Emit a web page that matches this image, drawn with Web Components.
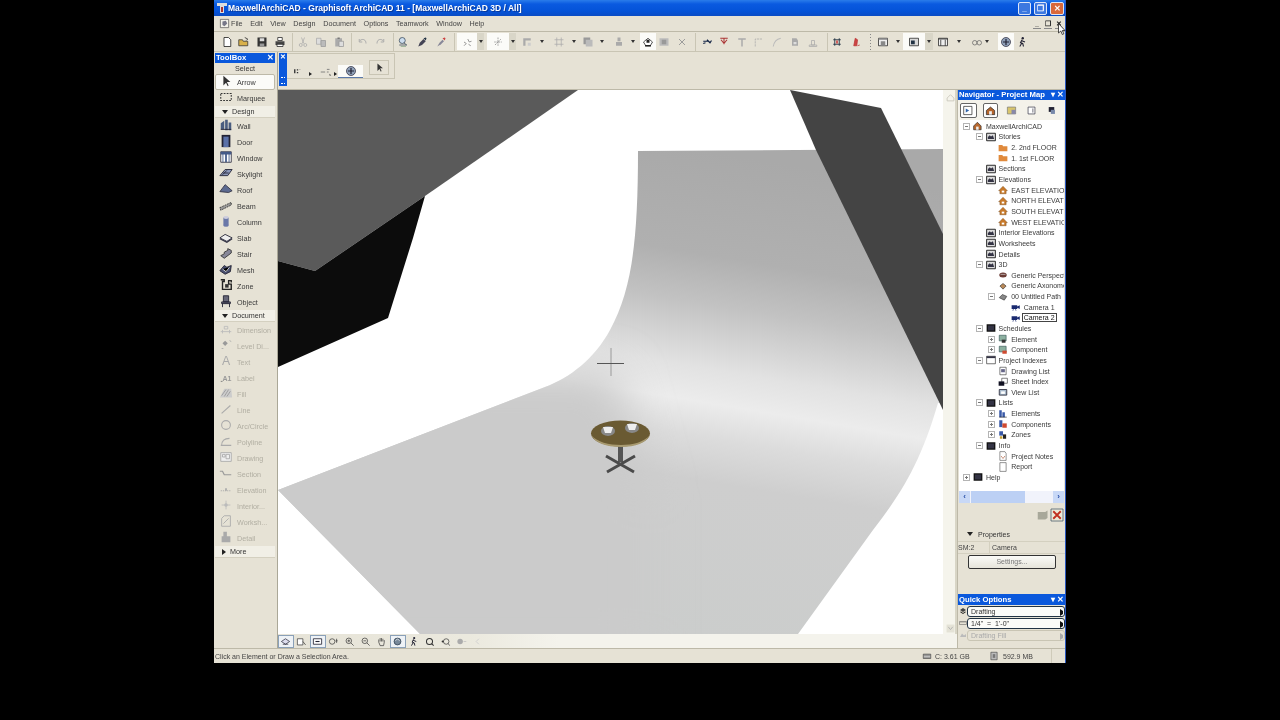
<!DOCTYPE html>
<html>
<head>
<meta charset="utf-8">
<title>ArchiCAD</title>
<style>
  html, body { margin: 0; background: #000; height: 100%; overflow: hidden; }
  body { font: 7.2px "Liberation Sans", Arial, sans-serif; color: #333; }
</style>
</head>
<body>
<app-window></app-window>
<script>
const ICONS = {
  new: '<path d="M4 2h6l3 3v9H4z" fill="#fff" stroke="#111"/>',
  open: '<path d="M1 13V5h5l1 2h6v6z" fill="#d8b04a" stroke="#333"/><path d="M9 2l4 2-2 2" fill="none" stroke="#222"/>',
  save: '<path d="M2 2h12v12H2z" fill="#333"/><path d="M5 3h6v4H5z" fill="#ddd"/><path d="M5 10h6v4H5z" fill="#999"/>',
  print: '<path d="M5 2h6v4H5z" fill="#fff" stroke="#222"/><path d="M2 7h12v5H2z" fill="#444"/><path d="M4 11h8v3H4z" fill="#fff" stroke="#222"/>',
  cut: '<path d="M6 2l3 8M10 2l-3 8" stroke="#aaa" fill="none"/><circle cx="5" cy="12" r="2" fill="none" stroke="#aaa"/><circle cx="11" cy="12" r="2" fill="none" stroke="#aaa"/>',
  copy: '<path d="M2 3h6v8H2z" fill="#ddd" stroke="#aaa"/><path d="M8 6h6v8H8z" fill="#bbb" stroke="#999"/>',
  paste: '<path d="M3 3h9v11H3z" fill="#aaa"/><path d="M6 2h3v2H6z" fill="#777"/><path d="M8 7h6v7H8z" fill="#ddd" stroke="#999"/>',
  undo: '<path d="M4 6c4-3 8-1 8 4M3 4v4h4" fill="none" stroke="#aaa" stroke-width="1.3"/>',
  redo: '<path d="M12 6c-4-3-8-1-8 4M13 4v4H9" fill="none" stroke="#aaa" stroke-width="1.3"/>',
  find: '<circle cx="7" cy="6" r="4" fill="#cde" stroke="#345"/><path d="M3 12h10M9 9l4 3" stroke="#345"/><path d="M5 14h7" stroke="#8a8"/>',
  pick: '<path d="M3 14l2-5 5-5 3 3-5 5z" fill="#445"/><path d="M10 3l3-1 1 1-1 3z" fill="#234"/>',
  pick2: '<path d="M3 14l3-5 4-4 2 2-4 4z" fill="#889"/><path d="M10 3l3-1 1 1-1 3z" fill="#c44"/>',
  grav: '<path d="M4 8l3 2-3 3M9 4l2 4 3-1M10 11l3 2" stroke="#777" fill="none"/>',
  grav2: '<path d="M8 2v12M3 8h10M4 12l8-8" stroke="#888" stroke-dasharray="2 1" fill="none"/>',
  align: '<path d="M3 3v10h3V6h7V3z" fill="#aaa"/><path d="M9 9h4v4H9z" fill="#ccc"/>',
  grid: '<path d="M5 2v12M11 2v12M2 5h12M2 11h12" stroke="#aaa"/>',
  layer: '<path d="M2 2h9v9H2z" fill="#999"/><path d="M5 5h9v9H5z" fill="#bbb"/>',
  pen: '<path d="M6 2h4v5H6zM4 8h8v5H4z" fill="#aaa"/>',
  plan: '<path d="M2 8l6-5 6 5-3 5H5z" fill="#fff" stroke="#222"/><path d="M4 12h8v2H4zM6 5h4v4H6z" fill="#222"/>',
  sect: '<path d="M2 3h12v10H2z" fill="#bbb"/><path d="M5 5h6v6H5z" fill="#999"/>',
  xmark: '<path d="M4 4l8 8M12 4l-8 8" stroke="#999" stroke-width="1.3"/>',
  a1: '<path d="M3 7h6M8 5l4 4 2-3M3 10l3-1" stroke="#124" stroke-width="1.6" fill="none"/>',
  a2: '<path d="M3 3h10M8 3v8M4 5l4 5 4-5" stroke="#a33" stroke-width="1.4" fill="none"/>',
  a3: '<path d="M3 3h10v2H9v9H7V5H3z" fill="#aaa"/>',
  a4: '<path d="M3 14V4h9" stroke="#aaa" fill="none" stroke-dasharray="3 1"/>',
  a5: '<path d="M3 14C4 8 8 4 13 3" stroke="#bbb" fill="none" stroke-width="1.4"/>',
  a6: '<path d="M4 3h6l2 3v7H4z" fill="#aaa"/><path d="M6 8h4v3H6z" fill="#ddd"/>',
  a7: '<path d="M3 12h10v2H3zM6 6h4v6H6z" fill="none" stroke="#aaa"/>',
  a8: '<path d="M3 5h10M3 11h10M5 3v10M11 3v10" stroke="#234" fill="none" stroke-width="1.2"/><path d="M7 6h2v4H7z" fill="#c33"/>',
  a9: '<path d="M7 3l3 2-1 8H5zM10 13l3-1" stroke="#b33" fill="#c44" stroke-width="1"/>',
  fr1: '<path d="M2 3h12v10H2z" fill="#eee" stroke="#222"/><path d="M2 3h12v2H2zM5 7h6v6H5z" fill="#888"/>',
  fr2: '<path d="M2 3h12v10H2z" fill="#d8d8d8" stroke="#222"/><path d="M4 6h5v5H4z" fill="#234"/>',
  fr3: '<path d="M2 3h12v10H2z" fill="#eee" stroke="#222"/><path d="M5 5v8M11 5v8M2 4h12" stroke="#222"/>',
  glass: '<circle cx="5" cy="9" r="3" fill="none" stroke="#666"/><circle cx="11" cy="9" r="3" fill="none" stroke="#666"/>',
  orbit: '<circle cx="8" cy="8" r="6" fill="#8fa0b8" stroke="#334"/><path d="M4 8h8M8 4v8" stroke="#223" stroke-width="1.6"/>',
  walk: '<circle cx="9" cy="3" r="1.6" fill="#223"/><path d="M8 5l-2 4 3 1 1 4M8 9l-3 5M7 6l5 2" stroke="#223" stroke-width="1.4" fill="none"/>',
  arrow: '<path d="M5 2v11l3-3 2 4 1-1-2-4h4z" fill="#333"/>',
  marq: '<path d="M2 4h12v8H2z" fill="none" stroke="#333" stroke-dasharray="2 1.4" stroke-width="1.2"/>',
  wall: '<path d="M2 6l4-3v10H2zM7 2h3v12H7zM11 5h3v9h-3z" fill="#4a5d80"/><path d="M2 13h12" stroke="#223"/>',
  door: '<path d="M3 1h10v14H3z" fill="#223"/><path d="M5 3h6v12H5z" fill="#5a70a8"/>',
  window: '<path d="M2 2h12v12H2z" fill="#fff" stroke="#334"/><path d="M2 2h12v3H2zM7 5h2v9H7zM4 5h1v9H4zM11 5h1v9h-1z" fill="#445a88"/>',
  skylight: '<path d="M1 11l6-7h8l-5 7z" fill="#8a96b8" stroke="#223"/><path d="M5 8h6M4 10l5-5" stroke="#223"/>',
  roof: '<path d="M1 11L7 3l8 7-4 2z" fill="#5c6a90" stroke="#334"/>',
  beam: '<path d="M1 11l13-6v3L2 14z" fill="#999" stroke="#333" stroke-dasharray="2 1"/>',
  column: '<path d="M5 4h6v9H5z" fill="#6a78a8"/><ellipse cx="8" cy="4" rx="3" ry="1.6" fill="#ccd"/><ellipse cx="8" cy="13" rx="3" ry="1.6" fill="#6a78a8"/>',
  slab: '<path d="M1 9l6-4 8 4-6 4z" fill="#eee" stroke="#223"/><path d="M1 10l8 4 6-4" stroke="#334" fill="none" stroke-width="1.3"/>',
  stair: '<path d="M2 11l4-2 0-2 4-2 0-2 4 2v3l-8 6z" fill="#889" stroke="#333"/>',
  mesh: '<path d="M1 10l5-6 3 2 5-2-1 7-6 3z" fill="#4a5070" stroke="#223"/><path d="M4 8l4 3 4-5" stroke="#ddd"/>',
  zone: '<path d="M2 2h4v2H4v9h10V7h-3V3h3v2" fill="none" stroke="#222" stroke-width="1.6"/><path d="M7 7h4v4H7z" fill="#333"/>',
  object: '<path d="M5 2h6v7H5zM3 9h10v2H3zM4 11v4M12 11v4" fill="#667" stroke="#223"/>',
  dim: '<path d="M2 11h12M4 9v4M12 9v4M6 5h4v3H6z" stroke="#bbb" fill="none"/>',
  level: '<path d="M4 6l3-3 3 3-3 3z" fill="#999"/><path d="M3 12h2M12 3l2 1" stroke="#aaa"/>',
  atext: '<text x="8" y="13" text-anchor="middle" font-family="Liberation Sans" font-size="14" fill="#aaa">A</text>',
  alabel: '<text x="9" y="12" text-anchor="middle" font-family="Liberation Sans" font-size="8" font-weight="700" fill="#999">A1</text><path d="M2 13h2" stroke="#777"/>',
  fill: '<path d="M1 13L6 3h8l1 10z" fill="#ccc"/><path d="M3 11l5-7M6 12l5-8M9 12l4-6" stroke="#999"/>',
  line: '<path d="M3 13L13 4" stroke="#aaa" stroke-width="1.2"/>',
  arc: '<circle cx="8" cy="8" r="5" fill="none" stroke="#aaa" stroke-width="1.2"/>',
  poly: '<path d="M2 13h12M3 13c0-5 3-8 9-8" fill="none" stroke="#aaa" stroke-width="1.2"/>',
  draw: '<path d="M2 3h12v10H2z" fill="#eee" stroke="#aaa"/><path d="M4 5h3v3H4zM8 5h4v5H8z" fill="none" stroke="#aaa"/>',
  sect2: '<path d="M1 6h3l2 4h5l3 0" stroke="#999" fill="none" stroke-width="1.4"/>',
  elev: '<path d="M2 10h12" stroke="#aaa" stroke-dasharray="1.4 1"/><path d="M7 7h2v3H7z" fill="#aaa"/>',
  inter: '<path d="M8 3v10M3 8h10" stroke="#bbb"/><circle cx="8" cy="8" r="2" fill="#bbb"/>',
  work: '<path d="M3 14V5l3-3h7v12z" fill="none" stroke="#aaa"/><path d="M5 11l6-6" stroke="#aaa"/>',
  detail: '<path d="M5 2h4v5h4v7H3V7h2z" fill="#aaa"/>',
  tabmap: '<path d="M1 2h12v12H1z" fill="#fff" stroke="#222"/><path d="M4 5l5 3-5 3z" fill="#36a"/>',
  tabhome: '<path d="M2 8l6-5 6 5v6H2z" fill="#b3642c" stroke="#222"/><path d="M6 9h4v5H6z" fill="#eee"/>',
  tabfold: '<path d="M2 3h12v10H2z" fill="#d9c56b" stroke="#777"/><path d="M8 7h6v6H8z" fill="#88a"/>',
  tabpage: '<path d="M3 3h10v10H3z" fill="#fff" stroke="#334"/><path d="M10 5v6" stroke="#334"/>',
  tabpub: '<path d="M4 3h8v7H4z" fill="#223"/><path d="M7 7h6v6H7z" fill="#78a"/>',
  project: '<path d="M1 8l6-6 6 6v6H1z" fill="#b8682e" stroke="#222"/><path d="M5 9h4v5H5z" fill="#eee"/>',
  box: '<path d="M1 2h14v12H1z" fill="#ddd" stroke="#111" stroke-width="1.4"/><path d="M3 8l3-3 2 2 3-2 2 6H3z" fill="#334"/>',
  black: '<path d="M1 2h14v12H1z" fill="#111"/><path d="M3 4h10v8H3z" fill="#334"/>',
  frame: '<path d="M1 2h14v12H1z" fill="#fff" stroke="#222"/><path d="M1 2h14v3H1z" fill="#334"/>',
  story: '<path d="M1 3h6l1 2h7v8H1z" fill="#e08a3c"/>',
  house: '<path d="M1 9l7-7 7 7-2 0v5H3V9z" fill="#c87a2a" stroke="#6a3a10" stroke-width=".6"/><path d="M6 9h4v3H6z" fill="#fff"/>',
  persp: '<ellipse cx="8" cy="8" rx="6" ry="4" fill="#6b3c35"/><path d="M4 7h8" stroke="#ddd"/>',
  axo: '<path d="M3 8l5-4 5 4-5 5z" fill="#b98958" stroke="#333"/>',
  path3d: '<path d="M2 9l5-5 7 3-4 6z" fill="#888" stroke="#333"/>',
  camera: '<path d="M1 5h9v6H1zM10 7l4-2v6l-4-2z" fill="#1a2a70"/><path d="M4 11l-1 3M7 11l1 3" stroke="#1a2a70"/>',
  sched: '<path d="M2 2h11v9H2z" fill="#8cb0a0" stroke="#355"/><path d="M6 9h6v5H6z" fill="#333"/>',
  sched2: '<path d="M2 2h11v9H2z" fill="#8cb0a0" stroke="#355"/><path d="M7 9h7v5H7z" fill="#d04a30"/>',
  draws: '<path d="M3 2h10v12H3z" fill="#fff" stroke="#333"/><path d="M5 5h6v5H5z" fill="#668"/>',
  sheet: '<path d="M6 2h9v8H6z" fill="#fff" stroke="#333"/><path d="M1 7h9v7H1z" fill="#112"/>',
  viewl: '<path d="M2 4h12v9H2z" fill="#abc" stroke="#223" stroke-width="1.3"/><path d="M5 7h6v4H5z" fill="#fff"/>',
  elems: '<path d="M2 2h4v11H2zM7 5h4v8H7z" fill="#3a5aa8"/><path d="M2 13h12" stroke="#222"/>',
  comps: '<path d="M2 2h5v11H2z" fill="#3a5aa8"/><path d="M7 7h7v7H7z" fill="#d04a30"/>',
  zones: '<path d="M2 2h6v7H2z" fill="#3a5aa8"/><path d="M8 7h5v7H8z" fill="#222"/><path d="M3 10h4v4H3z" fill="#c8a030"/>',
  notes: '<path d="M3 1h8l2 3v11H3z" fill="#fff" stroke="#555"/><path d="M5 8l3 4 3-4" stroke="#a53" fill="none"/>',
  report: '<path d="M3 1h10v14H3z" fill="#fff" stroke="#555"/>',
  logo: '<path d="M2 2h12v12H2z" fill="#f4f2ea" stroke="#555"/><path d="M5 5l5-1 2 4-4 4-3-2z" fill="#778"/>',
  nav1: '<path d="M2 8l6-4 6 4-6 4z" fill="#dde" stroke="#223"/><path d="M4 12h8" stroke="#223"/>',
  nav2: '<path d="M2 4h8v9H2z" fill="#fff" stroke="#333"/><path d="M10 8l4 5" stroke="#333"/>',
  nav3: '<path d="M2 4h12v8H2z" fill="#fff" stroke="#223" stroke-width="1.2"/><path d="M5 8h6" stroke="#223" stroke-width="1.6"/>',
  zfit: '<circle cx="6" cy="8" r="4" fill="none" stroke="#333"/><path d="M11 7h3M12.5 4v6" stroke="#333"/>',
  zin: '<circle cx="7" cy="7" r="4" fill="none" stroke="#333"/><path d="M5 7h4M7 5v4M10 10l4 4" stroke="#333"/>',
  zout: '<circle cx="7" cy="7" r="4" fill="none" stroke="#333"/><path d="M5 7h4M10 10l4 4" stroke="#333"/>',
  pan: '<path d="M4 9V5M6 8V3M8 8V3M10 8V4M12 9V6M4 9l2 5h5l1-5" stroke="#333" fill="none"/>',
  nav8: '<circle cx="8" cy="8" r="5" fill="#789" stroke="#234"/><path d="M5 7l3-3 3 3" stroke="#fff" fill="none"/>',
  zprev: '<circle cx="8" cy="8" r="4.4" fill="none" stroke="#333" stroke-width="1.5"/><path d="M11 11l3 3" stroke="#333" stroke-width="1.5"/>',
  znext: '<circle cx="4" cy="8" r="1.6" fill="#333"/><circle cx="9" cy="8" r="4" fill="none" stroke="#333"/><path d="M12 11l2 3" stroke="#333"/>',
  zdis: '<circle cx="6" cy="8" r="4" fill="#aaa"/><path d="M11 8h4" stroke="#bbb"/>',
  chev: '<path d="M10 4L6 8l4 4" fill="none" stroke="#ccc" stroke-width="1.2"/>',
  idlg: '<path d="M3 6h2v6H3zM7 6h2v2H7zM7 10h2v2H7zM11 6h1v1h-1z" fill="#333"/>',
  ilin: '<path d="M2 8h5M9 5h3M9 8h2" stroke="#777"/><path d="M12 10l2 2-2 0z" fill="#333"/>',
  layers: '<path d="M2 6l6-4 6 4-6 4z" fill="#444"/><path d="M2 10l6 4 6-4-2-1-4 3-4-3z" fill="#222"/>',
  scale: '<path d="M1 5h14v6H1z" fill="none" stroke="#555"/><path d="M4 5v3M8 5v3M12 5v3" stroke="#555"/>',
  pen2: '<path d="M2 12l4-7 4 4 4-3v6z" fill="#bbb"/>',
  disk: '<path d="M2 5h12v7H2z" fill="#999" stroke="#444"/><path d="M3 9h10" stroke="#ddd"/>',
  ram: '<path d="M3 2h10v12H3z" fill="#bbb" stroke="#444"/><path d="M6 5h4v6H6z" fill="#777"/>',
  gearbox: '<path d="M1 4h10l3-2v10l-3 2H1z" fill="#a8a89a"/>',
  redx: '<path d="M0 0h16v16H0z" fill="#ece9d8" stroke="#456"/><path d="M3 3l10 10M13 3L3 13" stroke="#c03020" stroke-width="2.4"/>',
  up: '<path d="M2 9l6-6 6 6v5H2z" fill="none" stroke="#c4c2b6" stroke-width="1.4"/>',
  dn: '<path d="M1 1h14v14H1z" fill="#e4e2d6"/><path d="M4 5l4 5 4-5" fill="none" stroke="#aaa" stroke-width="1.4"/>'
};

class UiIcon extends HTMLElement {
  static get observedAttributes() { return ['name']; }
  constructor() {
    super();
    this.attachShadow({ mode: 'open' });
  }
  attributeChangedCallback() { this.draw(); }
  connectedCallback() { this.draw(); }
  draw() {
    const s = this.getAttribute('size') || 12;
    this.shadowRoot.innerHTML = `
      <style>:host { display: inline-flex; flex: none; line-height: 0; } svg { overflow: visible; }</style>
      <svg width="${s}" height="${s}" viewBox="0 0 16 16">${ICONS[this.getAttribute('name')] || ''}</svg>`;
  }
}
customElements.define('ui-icon', UiIcon);

const titleTemplate = document.createElement('template');
titleTemplate.innerHTML = `
  <style>
  :host { display: flex; align-items: center; height: 16px; padding: 0 1px 0 3px; color: #fff;
    font: bold 8.5px "Liberation Sans", Arial, sans-serif; text-shadow: 1px 1px 0 #0a3a9a;
    background: linear-gradient(#2a7cea 0, #0a5ae0 25%, #0453d8 70%, #0a4cc4 100%); }
  .txt { flex: 1; white-space: nowrap; overflow: hidden; margin-left: 1px; }
  .btn { width: 13px; height: 13px; margin-left: 3px; border: 1px solid #dce6f8; border-radius: 2px; background: #3c78e0; display: flex; align-items: center; justify-content: center; font-size: 8px; box-sizing: border-box; text-shadow: none; }
  .close { background: #d9683a; width: 14px; }
  .logo { width: 10px; height: 10px; }
  </style>
  <svg class="logo" viewBox="0 0 10 10"><path d="M0 0h10v3H7v7H3V3H0z" fill="#ddd"/><path d="M4 4h2v5H4z" fill="#a33"/></svg>
  <span class="txt"><slot></slot></span>
  <span class="btn">_</span><span class="btn">&#10064;</span><span class="btn close">&#10005;</span>
`;
class WinTitle extends HTMLElement {
  constructor() {
    super();
    this.attachShadow({ mode: 'open' }).appendChild(titleTemplate.content.cloneNode(true));
  }
}
customElements.define('win-title', WinTitle);

const menuTemplate = document.createElement('template');
menuTemplate.innerHTML = `
  <style>
  :host { display: flex; align-items: center; height: 16px; padding-left: 5px; color: #444; border-bottom: 1px solid #bdb9a8; box-sizing: border-box; }
  .items { display: flex; flex: 1; margin-left: 1px; white-space: nowrap; }
  .items span { margin-right: 7.6px; }
  .mdi { display: flex; gap: 3px; margin-right: 2px; font: bold 7px "Liberation Sans", sans-serif; color: #222; }
  .mdi span { width: 8px; height: 9px; text-align: center; line-height: 9px; border-bottom: 1px solid #888; }
  </style>
  <ui-icon name="logo" size="11"></ui-icon>
  <div class="items"><span>File</span><span>Edit</span><span>View</span><span>Design</span><span>Document</span><span>Options</span><span>Teamwork</span><span>Window</span><span>Help</span></div>
  <div class="mdi"><span>_</span><span>&#10064;</span><span>&#10005;</span></div>
`;
class MenuBar extends HTMLElement {
  constructor() {
    super();
    this.attachShadow({ mode: 'open' }).appendChild(menuTemplate.content.cloneNode(true));
  }
}
customElements.define('menu-bar', MenuBar);

// [icon, centre x on the page, highlighted width]
const TOOLS = [
  ['new',227],['open',244],['save',262],['print',280],['|',292],['cut',303],['copy',321],['paste',339],['|',351],['undo',363],['redo',380],['|',393],
  ['find',403],['pick',422],['pick2',441],['|',454],['grav',467,20],['g',480.5,7],['grav2',498,22],['g',512.5,7],['align',527],['.',542],['grid',559],['.',574],['layer',588],['.',602],['pen',619],['.',633],
  ['plan',648,16],['sect',664],['xmark',682],['|',695],['a1',707],['a2',724],['a3',742],['a4',759],['a5',777],['a6',795],['a7',813],['|',827],['a8',837],['a9',856],[':',870],
  ['fr1',883],['.',898],['fr2',914,22],['g',929,8],['fr3',943],['.',959],['glass',977],['.',987],['orbit',1006,16],['walk',1022]
];

const stripStyle = `
  :host { display: flex; align-items: center; height: 20px; background: #e6e2d5; border-bottom: 1px solid #c9c5b4; box-sizing: border-box; }
  .c { display: flex; align-items: center; justify-content: center; height: 17px; flex: none; }
  .c.w { background: #fbfbf8; }
  .c.g { background: #d9d6c8; }
  .sep { width: 1px; height: 18px; background: #c9c5b4; flex: none; }
  .dot { width: 0; height: 0; border: 2px solid transparent; border-top: 3px solid #333; border-bottom: 0; flex: none; }
  .dots { width: 1px; height: 16px; flex: none; background: repeating-linear-gradient(#888 0 1px, transparent 1px 3px); }
`;
class TopToolbar extends HTMLElement {
  constructor() {
    super();
    let right = 214;
    const cells = TOOLS.map(([n, cx, w]) => {
      const width = n === '|' || n === ':' ? 1 : n === '.' ? 4 : w || 12;
      const m = `margin-left:${cx - width / 2 - right}px`;
      right = cx + width / 2;
      if (n === '|') return `<span class="sep" style="${m}"></span>`;
      if (n === '.') return `<span class="dot" style="${m}"></span>`;
      if (n === ':') return `<span class="dots" style="${m}"></span>`;
      if (n === 'g') return `<span class="c g" style="${m};width:${width}px"><span class="dot"></span></span>`;
      return `<span class="c${w ? ' w' : ''}" style="${m};width:${width}px"><ui-icon name="${n}"></ui-icon></span>`;
    }).join('');
    this.attachShadow({ mode: 'open' }).innerHTML = `<style>${stripStyle}</style>${cells}`;
  }
}
customElements.define('top-toolbar', TopToolbar);

const infoTemplate = document.createElement('template');
infoTemplate.innerHTML = `
  <style>
  :host { display: flex; height: 38px; background: #e6e2d5; border-bottom: 1px solid #bdb9a8; box-sizing: border-box; padding-left: 1px; }
  .grip { width: 8px; height: 33px; margin-top: 1px; background: #0a58dc; color: #fff; font: bold 7px/8px "Liberation Sans", sans-serif; text-align: center; display: flex; flex-direction: column; justify-content: space-between; align-items: center; }
  .grip i { width: 4px; height: 7px; border: 1px dotted #fff; border-width: 1px 0; margin-bottom: 2px; box-sizing: border-box; }
  .box { width: 108px; height: 26px; margin-top: 1px; border-top: 1px solid #c9c5b4; border-right: 1px solid #c9c5b4; border-bottom: 1px solid #c9c5b4; box-sizing: border-box; }
  .in { display: flex; align-items: flex-start; margin: 11px 0 0 5px; }
  .dot { width: 0; height: 0; border: 2px solid transparent; border-left: 3px solid #222; border-right: 0; margin-top: 7px; flex: none; }
  .cur { background: #fbfbf8; width: 25px; height: 13px; display: flex; justify-content: center; border-bottom: 1px solid #5a78a8; margin-left: 1px; box-sizing: border-box; flex: none; }
  .pick { margin: -5px 0 0 6px; width: 20px; height: 15px; border: 1px solid #c9c5b4; display: flex; align-items: center; justify-content: center; box-sizing: border-box; flex: none; }
  </style>
  <div class="grip">&#10005;<i></i></div>
  <div class="box">
    <div class="in"><ui-icon name="idlg" size="11"></ui-icon><span class="dot" style="margin-left:6px"></span><ui-icon name="ilin" size="14" style="margin-left:7px"></ui-icon><span class="dot" style="margin-left:1px"></span>
    <span class="cur"><ui-icon name="orbit" size="12"></ui-icon></span>
    <span class="pick"><ui-icon name="arrow" size="11"></ui-icon></span></div>
  </div>
`;
class InfoBox extends HTMLElement {
  constructor() {
    super();
    this.attachShadow({ mode: 'open' }).appendChild(infoTemplate.content.cloneNode(true));
  }
}
customElements.define('info-box', InfoBox);

const headStyle = `color:#fff;background:#0a58dc;font:bold 7.7px/10px "Liberation Sans",sans-serif;height:10px;display:flex;justify-content:space-between;padding:0 1px;white-space:nowrap;`;

const toolTemplate = document.createElement('template');
toolTemplate.innerHTML = `
  <style>
  :host { display: flex; align-items: center; height: 16px; padding-left: 4px; gap: 4px; color: #3a3a3a; box-sizing: border-box; white-space: nowrap; overflow: hidden; }
  :host([off]) { color: #b1aea2; }
  :host([on]) { background: #fbfbf8; border: 1px solid #bdb9a8; border-radius: 2px; padding-left: 3px; }
  </style>
  <span id="i"></span><slot></slot>
`;
class ToolItem extends HTMLElement {
  constructor() {
    super();
    this.attachShadow({ mode: 'open' }).appendChild(toolTemplate.content.cloneNode(true));
    this.shadowRoot.getElementById('i').innerHTML = `<ui-icon name="${this.getAttribute('icon')}" size="14"></ui-icon>`;
  }
}
customElements.define('tool-item', ToolItem);

const groupTemplate = document.createElement('template');
groupTemplate.innerHTML = `
  <style>
  :host { display: flex; align-items: center; height: 12px; background: #f1efe6; color: #333; padding-left: 7px; gap: 4px; box-sizing: border-box; border-bottom: 1px solid #d4d0c0; }
  i { width: 0; height: 0; border: 3px solid transparent; }
  :host(:not([closed])) i { border-top: 4px solid #222; border-bottom: 0; }
  :host([closed]) i { border-left: 4px solid #222; border-right: 0; }
  </style>
  <i></i><slot></slot>
`;
class ToolGroup extends HTMLElement {
  constructor() {
    super();
    this.attachShadow({ mode: 'open' }).appendChild(groupTemplate.content.cloneNode(true));
  }
}
customElements.define('tool-group', ToolGroup);

const paletteTemplate = document.createElement('template');
paletteTemplate.innerHTML = `
  <style>
  :host { display: block; background: #e6e2d5; border-right: 1px solid #aaa797; box-sizing: border-box; padding: 1px 2px 0 1px; }
  .head { ${headStyle} }
  .sel { height: 11px; line-height: 11px; text-align: center; color: #333; }
  .body { display: flex; flex-direction: column; }
  </style>
  <div class="head"><span>ToolBox</span><span>&#10005;</span></div>
  <div class="sel">Select</div>
  <div class="body"><slot></slot></div>
`;
class ToolPalette extends HTMLElement {
  constructor() {
    super();
    this.attachShadow({ mode: 'open' }).appendChild(paletteTemplate.content.cloneNode(true));
  }
}
customElements.define('tool-palette', ToolPalette);

const sceneTemplate = document.createElement('template');
sceneTemplate.innerHTML = `
  <style>
  :host { display: grid; grid-template-columns: 665px 14px; grid-template-rows: 544px 14px; background: #fff; min-width: 0; }
  svg { display: block; }
  .vs { background: #f5f4ec; border-right: 2px solid #d8d5c6; box-sizing: border-box; padding: 3px 0 0 3px; display: flex; flex-direction: column; justify-content: space-between; }
  .vs ui-icon { margin-bottom: 1px; }
  .bar { grid-column: 1 / 3; background: linear-gradient(90deg, #e6e3d7 0, #ebe9de 190px, #f4f3ec 280px, #f4f3ec 100%); display: flex; align-items: center; }
  .bar span { width: 15.95px; height: 13px; display: flex; align-items: center; justify-content: center; flex: none; box-sizing: border-box; }
  .bar span.on { border: 1px solid #8aa0b8; background: #eef2f6; }
  </style>
  <svg width="665" height="544" viewBox="278 90 665 544">
    <defs>
      <linearGradient id="grey" gradientUnits="userSpaceOnUse" x1="700" y1="150" x2="620" y2="630">
        <stop offset="0" stop-color="#a9a9a9"/><stop offset=".21" stop-color="#b0b0b0"/><stop offset=".31" stop-color="#c2c2c2"/><stop offset=".44" stop-color="#e2e2e2"/><stop offset=".51" stop-color="#ececec"/><stop offset=".58" stop-color="#dcdcdc"/><stop offset=".67" stop-color="#cecece"/><stop offset="1" stop-color="#cbcdcc"/>
      </linearGradient>
      <filter id="soft" x="-20%" y="-20%" width="140%" height="140%"><feGaussianBlur stdDeviation="22"/></filter>
      <clipPath id="shape"><path d="M638 151L943 149V403H938C920 465 900 495 873 530L798 634H420L278 490L545 387C570 378 595 358 610 330C632 290 638 240 638 151Z"/></clipPath>
    </defs>
    <path d="M638 151L943 149V403H938C920 465 900 495 873 530L798 634H420L278 490L545 387C570 378 595 358 610 330C632 290 638 240 638 151Z" fill="url(#grey)"/>
    <g clip-path="url(#shape)"><path d="M240 372H615L650 500V660H240Z" fill="#cbcbcb" filter="url(#soft)"/></g>
    <path d="M278 90H578L425 196L315 271L278 261Z" fill="#5a5a5a"/>
    <path d="M425 196L413 238L388 318L278 367V261L315 271Z" fill="#0c0c0c"/>
    <path d="M790 90L881 108L943 234V410L816 150Z" fill="#444"/>
    <path d="M611 348V376" stroke="#9a9a9a" stroke-width="1"/><path d="M597 363.500H624" stroke="#555" stroke-width="1"/>
    <path d="M618 446h5v16h-5z" fill="#555"/>
    <path d="M606 456L634 472M635 456L607 472" stroke="#4a4a4a" stroke-width="3"/>
    <ellipse cx="620.500" cy="433.500" rx="29.500" ry="13" fill="#6a5a32"/>
    <path d="M591 435c4 8 15 12 30 12s25-4 29-12c-6 7-17 10-29 10s-24-3-30-10z" fill="#a89a70"/>
    <ellipse cx="608" cy="431" rx="7" ry="5" fill="#888"/><path d="M603 427h10l-2 6h-6z" fill="#eee"/>
    <ellipse cx="632" cy="428" rx="7" ry="5" fill="#888"/><path d="M627 424h10l-2 6h-6z" fill="#eee"/>
  </svg>
  <div class="vs"><ui-icon name="up" size="9"></ui-icon><ui-icon name="dn" size="9"></ui-icon></div>
  <div class="bar" id="bar"></div>
`;
class SceneView extends HTMLElement {
  constructor() {
    super();
    this.attachShadow({ mode: 'open' }).appendChild(sceneTemplate.content.cloneNode(true));
    const names = ['nav1', 'nav2', 'nav3', 'zfit', 'zin', 'zout', 'pan', 'nav8', 'walk', 'zprev', 'znext', 'zdis', 'chev'];
    this.shadowRoot.getElementById('bar').innerHTML = names.map((n, i) =>
      `<span class="${[0, 2, 7].includes(i) ? 'on' : ''}"><ui-icon name="${n}" size="11"></ui-icon></span>`).join('');
  }
}
customElements.define('scene-view', SceneView);

const rowTemplate = document.createElement('template');
rowTemplate.innerHTML = `
  <style>
  :host { display: flex; align-items: center; height: 10.65px; color: #3a3a3a; white-space: nowrap; font-size: 7px; }
  .t { width: 7px; height: 7px; flex: none; border: 1px solid #b4b4b4; box-sizing: border-box; position: relative; margin-right: 3px; }
  .t::before { content: ""; position: absolute; left: 1px; right: 1px; top: 2px; height: 1px; background: #777; }
  .t.p::after { content: ""; position: absolute; top: 1px; bottom: 1px; left: 2px; width: 1px; background: #777; }
  .sp { width: 7px; flex: none; margin-right: 3px; }
  .l { padding: 0 1px; margin-left: 2px; }
  :host([sel]) .l { outline: 1px solid #444; color: #111; }
  </style>
  <span id="tw"></span><ui-icon id="ic" size="10"></ui-icon><span class="l"><slot></slot></span>
`;
class TreeRow extends HTMLElement {
  constructor() {
    super();
    this.attachShadow({ mode: 'open' }).appendChild(rowTemplate.content.cloneNode(true));
    this.style.paddingLeft = (this.getAttribute('lv') * 12.6 + 4) + 'px';
    const t = this.getAttribute('t');
    this.shadowRoot.getElementById('tw').className = t === '-' ? 't' : t === '+' ? 't p' : 'sp';
    this.shadowRoot.getElementById('ic').setAttribute('name', this.getAttribute('icon'));
  }
}
customElements.define('tree-row', TreeRow);

const TREE = [
  [0,'-','project','MaxwellArchiCAD'],[1,'-','box','Stories'],[2,'','story','2. 2nd FLOOR'],[2,'','story','1. 1st FLOOR'],
  [1,'','box','Sections'],[1,'-','box','Elevations'],[2,'','house','EAST ELEVATION'],[2,'','house','NORTH ELEVATION'],[2,'','house','SOUTH ELEVATION'],[2,'','house','WEST ELEVATION'],
  [1,'','box','Interior Elevations'],[1,'','box','Worksheets'],[1,'','box','Details'],[1,'-','box','3D'],[2,'','persp','Generic Perspective'],[2,'','axo','Generic Axonometry'],
  [2,'-','path3d','00 Untitled Path'],[3,'','camera','Camera 1'],[3,'','camera','Camera 2','sel'],
  [1,'-','black','Schedules'],[2,'+','sched','Element'],[2,'+','sched2','Component'],[1,'-','frame','Project Indexes'],[2,'','draws','Drawing List'],[2,'','sheet','Sheet Index'],[2,'','viewl','View List'],
  [1,'-','black','Lists'],[2,'+','elems','Elements'],[2,'+','comps','Components'],[2,'+','zones','Zones'],[1,'-','black','Info'],[2,'','notes','Project Notes'],[2,'','report','Report'],[0,'+','black','Help']
];

const navTemplate = document.createElement('template');
navTemplate.innerHTML = `
  <style>
  :host { display: flex; flex-direction: column; background: #e6e2d5; border-left: 1px solid #bdb9a8; height: 558px; box-sizing: border-box; overflow: hidden; font-size: 7px; }
  .head { ${headStyle} }
  .tabs { display: flex; align-items: center; height: 20px; gap: 6px; padding-left: 2px; background: #f4f2ea; flex: none; }
  .tabs span { width: 14px; height: 15px; display: flex; align-items: center; justify-content: center; }
  .tabs span.on { background: #fff; border: 1px solid #666; width: 15px; height: 15px; border-radius: 2px; box-sizing: border-box; }
  .tree { background: #fff; margin: 0 1px; height: 371px; padding-top: 1px; overflow: hidden; box-sizing: border-box; flex: none; }
  .hs { height: 12px; margin: 0 1px; display: flex; background: #f1f3fb; flex: none; }
  .hs b { width: 11px; background: #c8d8f6; color: #2a50a8; font: bold 8px/12px "Liberation Sans", sans-serif; text-align: center; }
  .hs i { width: 54px; margin-left: 1px; background: #bcd0f4; }
  .hs u { flex: 1; }
  .btns { height: 24px; display: flex; justify-content: flex-end; align-items: center; gap: 2px; padding-right: 2px; flex: none; }
  .prop { height: 14px; display: flex; align-items: center; gap: 5px; padding-left: 9px; color: #333; flex: none; }
  .prop i { border: 3px solid transparent; border-top: 4px solid #222; border-bottom: 0; }
  .row { display: grid; grid-template-columns: 32px 1fr; line-height: 11px; height: 11px; color: #444; border-top: 1px solid #d4d0c0; border-bottom: 1px solid #d4d0c0; flex: none; }
  .row span:first-child { border-right: 1px solid #d4d0c0; }
  .row span:last-child { padding-left: 2px; }
  .set { width: 88px; height: 14px; margin: 1px 0 0 10px; border: 1px solid #333; border-radius: 2px; background: linear-gradient(#fbfbf8, #e6e4da); text-align: center; line-height: 12px; color: #777; box-sizing: border-box; flex: none; }
  .gap { height: 25px; flex: none; }
  .qo { height: 11px; line-height: 11px; flex: none; }
  .qr { display: flex; align-items: center; height: 12px; padding-left: 1px; flex: none; }
  .qb { flex: 1; margin-right: 0; height: 11px; border: 1px solid #234; border-radius: 3px; background: #fbfbf8; display: flex; justify-content: space-between; line-height: 9px; padding: 0 1px 0 3px; color: #333; box-sizing: border-box; }
  .qb i { border: 2px solid transparent; border-left: 3px solid #111; border-right: 0; margin-top: 2px; }
  .qb.off { border-color: #c9c5b4; color: #aaa; background: none; }
  .qb.off i { border-left-color: #aaa; }
  </style>
  <div class="head"><span>Navigator - Project Map</span><span>&#9662; &#10005;</span></div>
  <div class="tabs">
    <span class="on" style="width:17px"><ui-icon name="tabmap" size="11"></ui-icon></span>
    <span class="on"><ui-icon name="tabhome" size="11"></ui-icon></span>
    <span><ui-icon name="tabfold" size="11"></ui-icon></span>
    <span><ui-icon name="tabpage" size="11"></ui-icon></span>
    <span><ui-icon name="tabpub" size="11"></ui-icon></span>
  </div>
  <div class="tree"><slot></slot></div>
  <div class="hs"><b>&lsaquo;</b><i></i><u></u><b>&rsaquo;</b></div>
  <div class="btns"><ui-icon name="gearbox" size="12"></ui-icon><ui-icon name="redx" size="12"></ui-icon></div>
  <div class="prop"><i></i>Properties</div>
  <div class="row"><span>SM:2</span><span>Camera</span></div>
  <div class="set">Settings...</div>
  <div class="gap"></div>
  <div class="head qo"><span>Quick Options</span><span>&#9662; &#10005;</span></div>
  <div class="qr"><ui-icon name="layers" size="8"></ui-icon><div class="qb"><span>Drafting</span><i></i></div></div>
  <div class="qr"><ui-icon name="scale" size="8"></ui-icon><div class="qb"><span>1/4" &nbsp;= &nbsp;1'-0"</span><i></i></div></div>
  <div class="qr"><ui-icon name="pen2" size="8"></ui-icon><div class="qb off"><span>Drafting Fill</span><i></i></div></div>
`;
class NavigatorPanel extends HTMLElement {
  constructor() {
    super();
    this.attachShadow({ mode: 'open' }).appendChild(navTemplate.content.cloneNode(true));
    this.innerHTML = TREE.map(([lv, t, ic, txt, sel]) =>
      `<tree-row lv="${lv}" t="${t}" icon="${ic}"${sel ? ' sel' : ''}>${txt}</tree-row>`).join('');
  }
}
customElements.define('navigator-panel', NavigatorPanel);

const statusTemplate = document.createElement('template');
statusTemplate.innerHTML = `
  <style>
  :host { display: flex; align-items: center; height: 15px; background: #e6e2d5; border-top: 1px solid #bdb9a8; box-sizing: border-box; padding: 0 13px 0 1px; color: #444; white-space: nowrap; font-size: 7px; }
  .m { flex: 1; }
  .s { display: flex; align-items: center; gap: 3px; height: 100%; box-sizing: border-box; }
  .s + .s { border-right: 1px solid #cfcbba; gap: 4px; }
  </style>
  <span class="m">Click an Element or Draw a Selection Area.</span>
  <span class="s" style="width:67px"><ui-icon name="disk" size="10"></ui-icon>C: 3.61 GB</span>
  <span class="s" style="width:63px"><ui-icon name="ram" size="10"></ui-icon>592.9 MB</span>
`;
class StatusBar extends HTMLElement {
  constructor() {
    super();
    this.attachShadow({ mode: 'open' }).appendChild(statusTemplate.content.cloneNode(true));
  }
}
customElements.define('status-bar', StatusBar);

const DESIGN = [['wall','Wall'],['door','Door'],['window','Window'],['skylight','Skylight'],['roof','Roof'],['beam','Beam'],['column','Column'],['slab','Slab'],['stair','Stair'],['mesh','Mesh'],['zone','Zone'],['object','Object']];
const DOCUMENT = [['dim','Dimension'],['level','Level Di...'],['atext','Text'],['alabel','Label'],['fill','Fill'],['line','Line'],['arc','Arc/Circle'],['poly','Polyline'],['draw','Drawing'],['sect2','Section'],['elev','Elevation'],['inter','Interior...'],['work','Worksh...'],['detail','Detail']];
const items = (list, off) => list.map(([i, t]) => `<tool-item icon="${i}"${off ? ' off' : ''}>${t}</tool-item>`).join('');

const appTemplate = document.createElement('template');
appTemplate.innerHTML = `
  <style>
  :host { display: flex; flex-direction: column; position: relative; width: 852px; height: 663px; margin-left: 214px; background: #e6e2d5; box-sizing: border-box; filter: blur(.4px); border-right: 1px solid #2a58c0; }
  .body { display: grid; grid-template-columns: 64px 1fr; height: 596px; }
  .main { display: flex; flex-direction: column; min-width: 0; }
  .mid { display: grid; grid-template-columns: 679px 1fr; height: 558px; }
  .cursor { position: absolute; left: 844px; top: 23px; }
  </style>
  <win-title>MaxwellArchiCAD - Graphisoft ArchiCAD 11 - [MaxwellArchiCAD 3D / All]</win-title>
  <menu-bar></menu-bar>
  <top-toolbar></top-toolbar>
  <div class="body">
    <tool-palette>
      <tool-item icon="arrow" on>Arrow</tool-item>
      <tool-item icon="marq">Marquee</tool-item>
      <tool-group>Design</tool-group>
      ${items(DESIGN)}
      <tool-group>Document</tool-group>
      ${items(DOCUMENT, true)}
      <tool-group closed>More</tool-group>
    </tool-palette>
    <div class="main">
      <info-box></info-box>
      <div class="mid">
        <scene-view></scene-view>
        <navigator-panel></navigator-panel>
      </div>
    </div>
  </div>
  <status-bar></status-bar>
  <svg class="cursor" width="8" height="13" viewBox="0 0 8 13"><path d="M.5.500V10l2.300-2 1.500 3.500 1.500-.7-1.500-3.300H7z" fill="#fff" stroke="#222" stroke-width=".8"/></svg>
`;
class AppWindow extends HTMLElement {
  constructor() {
    super();
    this.attachShadow({ mode: 'open' }).appendChild(appTemplate.content.cloneNode(true));
  }
}
customElements.define('app-window', AppWindow);
</script>
</body>
</html>
